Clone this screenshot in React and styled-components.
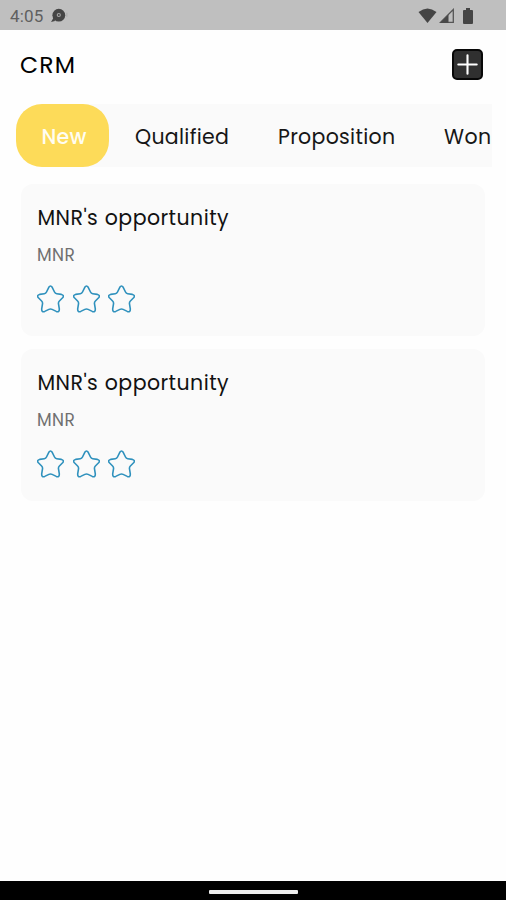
import React from "react";
import styled, { createGlobalStyle } from "styled-components";

const GlobalStyle = createGlobalStyle`
  * { box-sizing: border-box; }
  body { margin: 0; background: #fefefe; overflow: hidden; }
`;

const Screen = styled.div`
  width: 506px;
  height: 900px;
  display: flex;
  flex-direction: column;
  background: #fefefe;
  font-family: Poppins, Inter, sans-serif;
  color: #111;
  overflow: hidden;
`;

const StatusBar = styled.header`
  height: 30px;
  flex: none;
  padding: 1px 33px 0 10px;
  display: flex;
  align-items: center;
  justify-content: space-between;
  background: #bfbfbf;
  color: #606060;
`;

const StatusGroup = styled.div`
  display: flex;
  align-items: center;
  gap: ${(p) => p.$gap}px;
`;

const Clock = styled.span`
  padding-top: 1px;
  font: 400 17px/20px Roboto, sans-serif;
  letter-spacing: 0.2px;
`;

const TitleBar = styled.div`
  height: 74px;
  flex: none;
  padding: 19px 23px 0 20px;
  display: flex;
  align-items: flex-start;
  justify-content: space-between;
`;

const Title = styled.h1`
  margin: 2px 0 0;
  font-size: 23.5px;
  line-height: 28px;
  font-weight: 400;
  letter-spacing: 1.2px;
  color: #000;
`;

const AddButton = styled.button`
  width: 31px;
  height: 31px;
  padding: 0;
  border: 2px solid #080808;
  border-radius: 5px;
  background: #303030;
  display: grid;
  place-items: center;
`;

const Tabs = styled.nav`
  height: 63px;
  flex: none;
  margin: 0 14px 0 15.5px;
  display: flex;
  background: linear-gradient(90deg, transparent 40px, #fafafa 40px);
  overflow: hidden;
`;

const Tab = styled.button`
  flex: none;
  width: ${(p) => p.$width}px;
  padding: 1px 0 0 ${(p) => p.$inset}px;
  border: 0;
  border-radius: ${(p) => (p.$active ? 26 : 0)}px;
  background: ${(p) => (p.$active ? "#fddb59" : "transparent")};
  color: ${(p) => (p.$active ? "#fffdf2" : "#161616")};
  font: inherit;
  font-size: 20.5px;
  font-weight: ${(p) => (p.$active ? 500 : 400)};
  letter-spacing: ${(p) => p.$tracking}px;
  text-align: left;
  white-space: nowrap;
`;

const CardList = styled.main`
  flex: 1;
  padding: 17px 21px 0;
  display: flex;
  flex-direction: column;
  gap: 13px;
`;

const Card = styled.article`
  height: 152px;
  padding: 20px 16px 0;
  border-radius: 12px;
  background: #fafafa;
`;

const CardTitle = styled.h2`
  margin: 0;
  padding-left: 0.5px;
  font-size: 20.5px;
  line-height: 28px;
  font-weight: 400;
  letter-spacing: 0.45px;
  word-spacing: 0.6px;
  color: #111;
`;

const Contact = styled.p`
  margin: 12px 0 0;
  font-size: 17px;
  line-height: 22px;
  letter-spacing: 0.4px;
  color: #707070;
`;

const Rating = styled.div`
  margin-top: 19px;
  display: flex;
  gap: 8.5px;
`;

const NavigationBar = styled.footer`
  height: 19px;
  flex: none;
  display: flex;
  justify-content: center;
  padding-top: 9px;
  background: #000;
`;

const HomeHandle = styled.div`
  width: 89px;
  height: 4px;
  border-radius: 1px;
  background: #eee;
`;

const Star = () => (
  <svg width="27" height="28" viewBox="0 0 27 28" fill="none">
    <path
      d="M11.8 2.3Q13.5 -.4 15.2 2.3L17.5 7Q18.2 8.5 19.7 8.7L24.4 9.4Q27.6 10.3 25.6 12.8L22.4 16Q21.2 17.2 21.5 18.9L22.3 23.8Q22.5 27.7 19.3 26.4L15.1 24.4Q13.5 23.6 11.9 24.4L7.7 26.4Q4.5 27.7 4.7 23.8L5.5 18.9Q5.8 17.2 4.6 16L1.4 12.8Q-.6 10.3 2.6 9.4L7.3 8.7Q8.8 8.5 9.5 7Z"
      stroke="#2f91bd"
      strokeWidth="1.6"
      strokeLinejoin="round"
    />
  </svg>
);

const NotificationIcon = () => (
  <svg width="18" height="16" viewBox="0 0 18 16">
    <circle cx="8.8" cy="7.2" r="6.4" fill="#454545" />
    <path d="M4 9L5 13L1 14Z" fill="#454545" />
    <circle cx="8.8" cy="7" r="2.1" fill="#a5a5a5" />
    <circle cx="8.8" cy="7" r="1" fill="#454545" />
    <path d="M16.9 4.8v4" stroke="#aaa" />
  </svg>
);

const WifiIcon = () => (
  <svg width="19" height="16" viewBox="0 0 19 16">
    <path d="M.5 4Q9.5-3 18.5 4L9.5 15Z" fill="#454545" />
  </svg>
);

const SignalIcon = () => (
  <svg width="16" height="16" viewBox="0 0 16 16">
    <path d="M1.5 14.3H14.3V1.5Z" fill="none" stroke="#555" strokeWidth="1.3" />
    <path d="M1 15H9.5V6.5Z" fill="#484848" />
  </svg>
);

const BatteryIcon = () => (
  <svg width="10" height="16" viewBox="0 0 10 16">
    <path d="M3 0H7V2H9Q10 2 10 3V15Q10 16 9 16H1Q0 16 0 15V3Q0 2 1 2H3Z" fill="#454545" />
  </svg>
);

const PlusIcon = () => (
  <svg width="21" height="21" viewBox="0 0 21 21">
    <path d="M10.5 1.3V19.7M1.3 10.5H19.7" stroke="#fff" strokeWidth="2.1" strokeLinecap="round" />
  </svg>
);

const stages = [
  { name: "New", width: 93.5, inset: 26, tracking: 0.3, active: true },
  { name: "Qualified", width: 143, inset: 26, tracking: 0.3 },
  { name: "Proposition", width: 166, inset: 26, tracking: 0.3 },
  { name: "Won", width: 90, inset: 26, tracking: 0.4 },
];

const opportunities = [
  { id: 1, title: "MNR's opportunity", contact: "MNR" },
  { id: 2, title: "MNR's opportunity", contact: "MNR" },
];

export default function App() {
  return (
    <Screen>
      <GlobalStyle />
      <StatusBar>
        <StatusGroup $gap={6}>
          <Clock>4:05</Clock>
          <NotificationIcon />
        </StatusGroup>
        <StatusGroup $gap={8}>
          <StatusGroup $gap={2}>
            <WifiIcon />
            <SignalIcon />
          </StatusGroup>
          <BatteryIcon />
        </StatusGroup>
      </StatusBar>
      <TitleBar>
        <Title>CRM</Title>
        <AddButton aria-label="Add">
          <PlusIcon />
        </AddButton>
      </TitleBar>
      <Tabs>
        {stages.map((s) => (
          <Tab key={s.name} $width={s.width} $inset={s.inset} $tracking={s.tracking} $active={s.active}>
            {s.name}
          </Tab>
        ))}
      </Tabs>
      <CardList>
        {opportunities.map((o) => (
          <Card key={o.id}>
            <CardTitle>{o.title}</CardTitle>
            <Contact>{o.contact}</Contact>
            <Rating>
              <Star />
              <Star />
              <Star />
            </Rating>
          </Card>
        ))}
      </CardList>
      <NavigationBar>
        <HomeHandle />
      </NavigationBar>
    </Screen>
  );
}
